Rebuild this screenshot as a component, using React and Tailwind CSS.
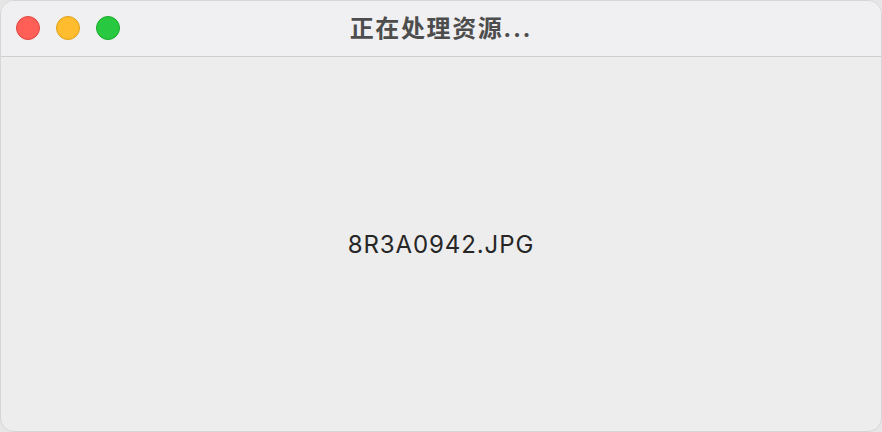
export default function App() {
  return (
    <div className="w-[882px] h-[432px] bg-[#e6e6e6]" style={{ fontFamily: '"Inter", "Noto Sans CJK SC", sans-serif' }}>
      <div className="w-full h-full rounded-[14px] overflow-hidden flex flex-col bg-[#ecedec] border border-[#d6d6d6]">
        <div className="h-[56px] shrink-0 relative flex items-center justify-center bg-[#f0f0f2] border-b border-[#cfcfd1]">
          <div className="absolute left-[15px] top-[15px] flex gap-[16px]">
            <div className="w-[24px] h-[24px] rounded-full bg-[#ff5f57] border border-[#e2463f]" />
            <div className="w-[24px] h-[24px] rounded-full bg-[#febc2e] border border-[#e1a116]" />
            <div className="w-[24px] h-[24px] rounded-full bg-[#28c840] border border-[#1aab29]" />
          </div>
          <div className="text-[24px] font-bold text-[#4d4d4d] tracking-[1.6px] leading-none">正在处理资源...</div>
        </div>
        <div className="flex-1 flex items-center justify-center pt-[2px]">
          <div className="text-[24px] text-[#262626] tracking-[0.9px] leading-none">8R3A0942.JPG</div>
        </div>
      </div>
    </div>
  );
}
